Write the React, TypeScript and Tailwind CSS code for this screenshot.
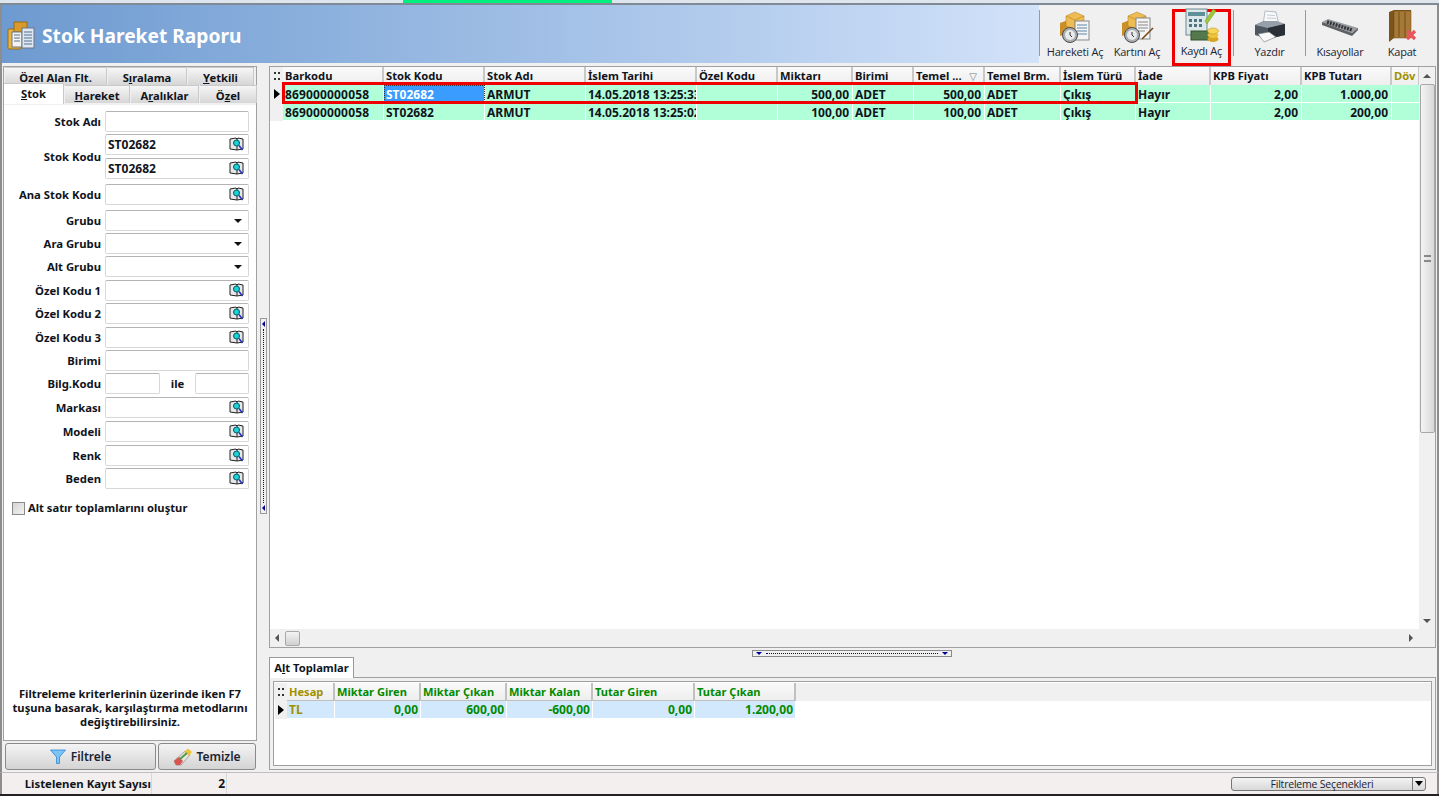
import React from 'react';

const FONT = "font-['Noto_Sans','DejaVu_Sans',sans-serif]";

const COLUMNS = [
  { label: 'Barkodu', w: 'w-[101px]' },
  { label: 'Stok Kodu', w: 'w-[101px]' },
  { label: 'Stok Adı', w: 'w-[101px]' },
  { label: 'İslem Tarihi', w: 'w-[111px]' },
  { label: 'Özel Kodu', w: 'w-[81px]' },
  { label: 'Miktarı', w: 'w-[75px]' },
  { label: 'Birimi', w: 'w-[61px]' },
  { label: 'Temel ...', w: 'w-[71px]', sort: true },
  { label: 'Temel Brm.', w: 'w-[76px]' },
  { label: 'İslem Türü', w: 'w-[75px]' },
  { label: 'İade', w: 'w-[75px]' },
  { label: 'KPB Fiyatı', w: 'w-[91px]' },
  { label: 'KPB Tutarı', w: 'w-[90px]' },
  { label: 'Döv', w: 'w-[28px]', gold: true },
];

const ROWS = [
  ['869000000058', 'ST02682', 'ARMUT', '14.05.2018 13:25:33', '', '500,00', 'ADET', '500,00', 'ADET', 'Çıkış', 'Hayır', '2,00', '1.000,00', ''],
  ['869000000058', 'ST02682', 'ARMUT', '14.05.2018 13:25:02', '', '100,00', 'ADET', '100,00', 'ADET', 'Çıkış', 'Hayır', '2,00', '200,00', ''],
];
const RIGHT_COLS = [5, 7, 11, 12];

const TOTAL_COLS = [
  { label: 'Hesap', value: 'TL', w: 'w-[48px]', gold: true },
  { label: 'Miktar Giren', value: '0,00', w: 'w-[86px]' },
  { label: 'Miktar Çıkan', value: '600,00', w: 'w-[86px]' },
  { label: 'Miktar Kalan', value: '-600,00', w: 'w-[86px]' },
  { label: 'Tutar Giren', value: '0,00', w: 'w-[102px]' },
  { label: 'Tutar Çıkan', value: '1.200,00', w: 'w-[101px]' },
];

type Field = { label?: string; kind: 'text' | 'lookup' | 'select'; value?: string; mt: string };

const FIELDS_TOP: Field[] = [{ label: 'Stok Adı', kind: 'text', mt: 'mt-0' }];

const FIELDS: Field[] = [
  { label: 'Ana Stok Kodu', kind: 'lookup', mt: 'mt-[5px]' },
  { label: 'Grubu', kind: 'select', mt: 'mt-[5px]' },
  { label: 'Ara Grubu', kind: 'select', mt: 'mt-[2px]' },
  { label: 'Alt Grubu', kind: 'select', mt: 'mt-[2px]' },
  { label: 'Özel Kodu 1', kind: 'lookup', mt: 'mt-[3px]' },
  { label: 'Özel Kodu 2', kind: 'lookup', mt: 'mt-[2px]' },
  { label: 'Özel Kodu 3', kind: 'lookup', mt: 'mt-[3px]' },
  { label: 'Birimi', kind: 'text', mt: 'mt-[2px]' },
];

const FIELDS_2: Field[] = [
  { label: 'Markası', kind: 'lookup', mt: 'mt-[3px]' },
  { label: 'Modeli', kind: 'lookup', mt: 'mt-[3px]' },
  { label: 'Renk', kind: 'lookup', mt: 'mt-[3px]' },
  { label: 'Beden', kind: 'lookup', mt: 'mt-[2px]' },
];

const LABEL = 'text-[11.3px] font-bold text-[#10141c] leading-[14px] whitespace-nowrap';
const TOOL_LABEL = "text-[11px] leading-[14px] text-[#1b2433] font-['Open_Sans',sans-serif] whitespace-nowrap tracking-[-0.2px]";

const BookIcon = () => (
  <svg width="16" height="15" viewBox="0 0 16 15" className="shrink-0">
    <path d="M1 2 L7 1 L8 2 L9 1 L14 2 L14 12 L8 13 L1 12 Z" fill="#e8e8e8" stroke="#222" strokeWidth="1" />
    <path d="M8 2 V13" stroke="#222" />
    <circle cx="7.5" cy="6" r="3" fill="#19d3d8" stroke="#0a5560" />
    <path d="M10 8.5 L13.5 13" stroke="#2233cc" strokeWidth="1.6" />
  </svg>
);

const Title = () => (
  <svg width="30" height="32" viewBox="0 0 30 32">
    <rect x="2" y="9" width="13" height="20" rx="1" fill="#e6b24a" stroke="#9a6c17" />
    <rect x="8" y="2" width="13" height="10" fill="#d99a2b" stroke="#9a6c17" />
    <rect x="6" y="12" width="10" height="15" fill="#f3f3f3" stroke="#777" />
    <rect x="16" y="8" width="12" height="20" fill="#dfe8f2" stroke="#6b7480" />
    <path d="M18 12h8M18 15h8M18 18h8M18 21h8M18 24h8M8 15h6M8 18h6M8 21h6" stroke="#56708c" />
  </svg>
);

const BoxStack = () => (
  <>
    <path d="M2 12 L10 9 L10 22 L2 25 Z" fill="#c98f28" />
    <path d="M10 9 L19 12 L19 25 L10 22 Z" fill="#f0c25c" />
    <path d="M8 5 L17 1 L26 5 L26 15 L17 18 L8 15 Z" fill="#eebc52" stroke="#b37f1f" strokeWidth="0.5" />
    <path d="M8 5 L17 9 L26 5 M17 9 V18" stroke="#b37f1f" strokeWidth="0.6" fill="none" />
  </>
);

const Clock = () => (
  <>
    <circle cx="12" cy="24" r="7.5" fill="#a9aeb4" stroke="#4d4d4d" />
    <circle cx="12" cy="24" r="5" fill="#e8eaec" />
    <path d="M12 21 V24 L14 26" stroke="#333" fill="none" />
  </>
);

const HareketIcon = () => (
  <svg width="34" height="33" viewBox="0 0 34 33">
    <BoxStack />
    <rect x="17" y="10" width="14" height="19" fill="#f4f4f4" stroke="#888" />
    <path d="M19 14h10M19 17h10M19 20h10M19 23h10" stroke="#5c87a8" />
    <Clock />
  </svg>
);

const KartIcon = () => (
  <svg width="34" height="33" viewBox="0 0 34 33">
    <BoxStack />
    <rect x="16" y="7" width="14" height="21" fill="#f4f4f4" stroke="#888" />
    <path d="M18 11h10M18 14h10M18 17h10M18 20h7" stroke="#888" />
    <path d="M22 28 L33 17" stroke="#7a4a1a" strokeWidth="1.6" />
    <Clock />
  </svg>
);

const KayitIcon = () => (
  <svg width="36" height="38" viewBox="0 0 36 38">
    <rect x="2" y="3" width="21" height="26" fill="#dbe7e8" stroke="#6d8a90" />
    <rect x="4" y="6" width="17" height="4" fill="#5f8f97" />
    <path d="M5 13h3v3H5zM10 13h3v3h-3zM15 13h3v3h-3zM5 18h3v3H5zM10 18h3v3h-3zM15 18h3v3h-3z" fill="#4f7480" />
    <path d="M21 15 L29 3 L32 5 L23 18 Z" fill="#9dc83c" stroke="#6f9422" strokeWidth="0.5" />
    <rect x="7" y="25" width="20" height="9" fill="#55784c" stroke="#34502f" />
    <ellipse cx="29" cy="33" rx="5.5" ry="3" fill="#d9a41f" />
    <ellipse cx="29" cy="29" rx="5.5" ry="3" fill="#eec43c" />
    <ellipse cx="29" cy="25" rx="5.5" ry="3" fill="#f6d654" stroke="#b98a17" strokeWidth="0.5" />
  </svg>
);

const PrinterIcon = () => (
  <svg width="34" height="34" viewBox="0 0 34 34">
    <path d="M12 1 L23 2 L26 15 L10 15 Z" fill="#f7f9fb" stroke="#9aa3ad" strokeWidth="0.7" />
    <path d="M14 5 L22 5.5 M14 8 L23 8.5" stroke="#c3ccd5" />
    <path d="M2 15 L11 11 L32 14 L32 25 L15 29 L2 25 Z" fill="#4e5660" />
    <path d="M2 15 L15 18 L32 14 L24 11 L11 11 Z" fill="#97a0aa" />
    <path d="M15 18 V29 L32 25 V14 Z" fill="#2b3036" />
    <path d="M5 24 L16 22 L23 27 L11 32 Z" fill="#f8f8f8" stroke="#777" strokeWidth="0.6" />
  </svg>
);

const KeyboardIcon = () => (
  <svg width="38" height="20" viewBox="0 0 38 20">
    <path d="M1 5 L7 2 L37 11 L31 16 Z" fill="#9a9da1" />
    <path d="M6 5 L31 13" stroke="#34363a" strokeWidth="3.5" strokeDasharray="2 1" />
    <path d="M1 5 L31 16 L37 11 L37 13 L31 19 L1 8 Z" fill="#5d6064" />
  </svg>
);

const DoorIcon = () => (
  <svg width="30" height="36" viewBox="0 0 30 36">
    <path d="M2 3 L7 1 L24 1 L24 29 L7 29 L2 33 Z" fill="#7b531b" />
    <rect x="7" y="2" width="17" height="27" fill="#a67a36" stroke="#6a4717" strokeWidth="0.5" />
    <path d="M12 3 V28 M18 3 V28" stroke="#6f4c1a" />
    <path d="M20 22 L28 30 M28 22 L20 30" stroke="#e8545c" strokeWidth="3.2" />
  </svg>
);

const Funnel = () => (
  <svg width="16" height="15" viewBox="0 0 16 15">
    <path d="M0.5 1 H15.5 L9.5 8 V14.5 L6.5 14.5 V8 Z" fill="#7cc4f4" stroke="#2a86d6" strokeWidth="0.8" />
  </svg>
);

const Eraser = () => (
  <svg width="20" height="18" viewBox="0 0 20 18">
    <path d="M1 13 L12 3 L17 7 L8 17 L3 17 Z" fill="#e9e4dc" stroke="#777" strokeWidth="0.6" />
    <path d="M1 13 L6 9 L10 13 L7 17 L3 17 Z" fill="#d9534f" />
    <path d="M11 4 L15 0.5 L19 4 L16 8 Z" fill="#efc43d" />
    <path d="M7 11 L14 5" stroke="#4f9a56" strokeWidth="2" />
  </svg>
);

const ToolButton = ({ icon, label, w, ml = '' }: { icon: React.ReactNode; label: string; w: string; ml?: string }) => (
  <div className={`${w} ${ml} h-[51px] flex flex-col items-center justify-end shrink-0`}>
    <div className="flex-1 flex items-center justify-center pt-[1px]">{icon}</div>
    <span className={TOOL_LABEL}>{label}</span>
  </div>
);

const Sep = () => <div className="w-[1px] h-[46px] bg-[#9a9a9a] shrink-0 mt-[2px] self-start" />;

const U = ({ children }: { children: string }) => <span className="underline">{children}</span>;

const Tab = ({ w, children, active }: { w: string; children: React.ReactNode; active?: boolean }) => (
  <div
    className={`${w} shrink-0 text-center text-[11.2px] font-bold text-[#10141c] border-t border-r border-[#c9c9c9] ${
      active ? 'bg-white h-[21px] leading-[19px] -mt-[2px] relative' : 'h-[18px] leading-[19px] bg-gradient-to-b from-[#f6f6f6] to-[#d6d6d6]'
    }`}
  >
    {children}
  </div>
);

const InputBox = ({ kind, value, w = 'w-[144px]' }: { kind: Field['kind']; value?: string; w?: string }) => (
  <div className={`${w} h-[21px] shrink-0 bg-white border border-[#d8d8d8] border-t-[#b4b4b4] rounded-[2px] flex items-center pl-[2px] pr-[3px] justify-between`}>
    <span className="text-[12px] font-bold text-[#10141c] leading-none">{value}</span>
    {kind === 'lookup' && <BookIcon />}
    {kind === 'select' && <span className="w-0 h-0 border-l-[4px] border-r-[4px] border-t-[4px] border-l-transparent border-r-transparent border-t-[#111] mr-[3px]" />}
  </div>
);

const FieldRow = ({ f }: { f: Field }) => (
  <div className={`flex items-center gap-[4px] ${f.mt}`}>
    <div className={`w-[97px] shrink-0 text-right ${LABEL}`}>{f.label}</div>
    <InputBox kind={f.kind} value={f.value} />
  </div>
);

const Indicator = () => (
  <span className="w-0 h-0 border-t-[5px] border-b-[5px] border-l-[6px] border-t-transparent border-b-transparent border-l-black" />
);

const Grip = () => (
  <div className="grid grid-cols-2 gap-x-[2px] gap-y-[4px] w-[6px]">
    <span className="w-[2px] h-[2px] bg-[#333]" />
    <span className="w-[2px] h-[2px] bg-[#333]" />
    <span className="w-[2px] h-[2px] bg-[#333]" />
    <span className="w-[2px] h-[2px] bg-[#333]" />
  </div>
);

const Scrollbar = () => (
  <div className="w-[16px] shrink-0 bg-[#f0f0f0] flex flex-col items-center">
    <div className="h-[17px] flex items-center justify-center">
      <span className="w-0 h-0 border-l-[4px] border-r-[4px] border-b-[4px] border-l-transparent border-r-transparent border-b-[#555]" />
    </div>
    <div className="w-[15px] h-[349px] border border-[#a8a8a8] rounded-[2px] bg-gradient-to-r from-[#f4f4f4] to-[#d8d8d8] flex items-center justify-center">
      <div className="w-[7px] h-[7px] border-y-2 border-[#888] border-double" />
    </div>
    <div className="flex-1" />
    <div className="h-[17px] flex items-center justify-center">
      <span className="w-0 h-0 border-l-[4px] border-r-[4px] border-t-[4px] border-l-transparent border-r-transparent border-t-[#555]" />
    </div>
  </div>
);

export default function App() {
  return (
    <div className={`${FONT} w-[1439px] h-[796px] overflow-hidden bg-[#f0f0f0] flex flex-col`}>
      {/* Window strip */}
      <div className="h-[3px] shrink-0 bg-[#dfe5ec] flex pl-[403px]">
        <div className="w-[209px] h-[3px] bg-[#00f07f]" />
      </div>
      <div className="h-[2px] shrink-0 bg-[#7f8a96]" />

      <div className="flex-1 min-h-0 flex flex-col border-l-2 border-r-2 border-[#8d8d8d]">
        {/* Title + toolbar */}
        <div className="h-[58px] shrink-0 flex">
          <div className="flex-1 flex items-center pl-[4px] pt-[4px] gap-[6px] bg-gradient-to-r from-[#6d9ad0] to-[#d2e2f9]">
            <Title />
            <h1 className="text-[19.2px] font-bold text-white leading-none">Stok Hareket Raporu</h1>
          </div>
          <div className="w-[398px] shrink-0 flex items-start pt-[3px] bg-[#f0f0f0]">
            <Sep />
            <ToolButton icon={<HareketIcon />} label="Hareketi Aç" w="w-[64px]" ml="ml-[3px]" />
            <ToolButton icon={<KartIcon />} label="Kartını Aç" w="w-[60px]" />
            <div className="w-[59px] h-[57px] ml-[5px] mt-[1px] border-[3px] border-[#ee0000] flex flex-col items-center justify-end pb-[5px] shrink-0">
              <div className="flex-1 flex items-center justify-center"><KayitIcon /></div>
              <span className={TOOL_LABEL}>Kaydı Aç</span>
            </div>
            <div className="w-[2px] shrink-0" />
            <Sep />
            <ToolButton icon={<PrinterIcon />} label="Yazdır" w="w-[71px]" />
            <Sep />
            <ToolButton icon={<KeyboardIcon />} label="Kısayollar" w="w-[68px]" />
            <ToolButton icon={<DoorIcon />} label="Kapat" w="w-[56px]" />
          </div>
        </div>

        <div className="flex-1 min-h-0 flex pt-[3px]">
          {/* Filter panel */}
          <div className="w-[254px] ml-[1px] shrink-0 flex flex-col">
            <div className="flex-1 min-h-0 flex flex-col border border-[#a0a0a0] bg-white">
              <div className="bg-[#f0f0f0] h-[38px] shrink-0">
                <div className="flex pl-[1px] gap-[1px]">
                  <Tab w="w-[102px]">Ö<U>z</U>el Alan Flt.</Tab>
                  <Tab w="w-[79px]">S<U>ı</U>ralama</Tab>
                  <Tab w="w-[66px]"><U>Y</U>etkili</Tab>
                </div>
                <div className="flex gap-[1px]">
                  <Tab w="w-[60px]" active><U>S</U>tok</Tab>
                  <Tab w="w-[65px]"><U>H</U>areket</Tab>
                  <Tab w="w-[68px]">A<U>r</U>alıklar</Tab>
                  <Tab w="w-[57px]">Ö<U>z</U>el</Tab>
                </div>
              </div>
              <div className="flex-1 min-h-0 flex flex-col pt-[6px]">
                {FIELDS_TOP.map((f, i) => <FieldRow key={i} f={f} />)}
                <div className="flex items-center gap-[4px] mt-[2px]">
                  <div className={`w-[97px] shrink-0 text-right ${LABEL}`}>Stok Kodu</div>
                  <div className="flex flex-col gap-[3px]">
                    <InputBox kind="lookup" value="ST02682" />
                    <InputBox kind="lookup" value="ST02682" />
                  </div>
                </div>
                {FIELDS.map((f, i) => <FieldRow key={i} f={f} />)}
                <div className="flex items-center gap-[4px] mt-[2px]">
                  <div className={`w-[97px] shrink-0 text-right ${LABEL}`}>Bilg.Kodu</div>
                  <InputBox kind="text" w="w-[55px]" />
                  <div className={`w-[27px] shrink-0 text-center ${LABEL}`}>ile</div>
                  <InputBox kind="text" w="w-[54px]" />
                </div>
                {FIELDS_2.map((f, i) => <FieldRow key={i} f={f} />)}
                <div className="flex items-center gap-[3px] pl-[8px] mt-[12px]">
                  <div className="w-[13px] h-[13px] border border-[#8a8a8a] bg-gradient-to-br from-[#d5d5d5] to-[#f2f2f2]" />
                  <span className="text-[11.2px] font-bold text-[#10141c] leading-[14px]">Alt satır toplamlarını oluştur</span>
                </div>
                <div className="flex-1" />
                <p className="text-[11.2px] leading-[14px] font-bold text-[#10141c] text-center pb-[11px]">
                  Filtreleme kriterlerinin üzerinde iken F7<br />
                  tuşuna basarak, karşılaştırma metodlarını<br />
                  değiştirebilirsiniz.
                </p>
              </div>
            </div>
            <div className="h-[30px] shrink-0 flex gap-[2px] pt-[2px] pl-[2px] mb-[1px]">
              <div className="w-[151px] h-[27px] rounded-[3px] border border-[#8a8a8a] bg-gradient-to-b from-[#f4f4f4] to-[#d4d4d4] flex items-center justify-center gap-[5px] text-[12px] text-[#1b2433] font-semibold">
                <Funnel />Filtrele
              </div>
              <div className="w-[98px] h-[27px] rounded-[3px] border border-[#8a8a8a] bg-gradient-to-b from-[#f4f4f4] to-[#d4d4d4] flex items-center justify-center gap-[3px] text-[12px] text-[#1b2433] font-semibold">
                <Eraser />Temizle
              </div>
            </div>
          </div>

          {/* Vertical splitter */}
          <div className="w-[12px] shrink-0 flex items-start justify-center pt-[252px]">
            <div className="w-[7px] h-[196px] border border-[#999] flex flex-col items-center justify-between py-[2px] bg-[#f0f0f0]">
              <span className="w-0 h-0 border-y-[3px] border-r-[3px] border-y-transparent border-r-[#000090]" />
              <div className="flex-1 my-[2px] border-l border-dotted border-[#000090]" />
              <span className="w-0 h-0 border-y-[3px] border-r-[3px] border-y-transparent border-r-[#000090]" />
            </div>
          </div>

          {/* Right side */}
          <div className="flex-1 min-w-0 flex flex-col pr-[1px]">
            <div className="h-[582px] shrink-0 border border-[#a0a0a0] bg-white flex flex-col">
              <div className="flex-1 min-h-0 flex">
                <div className="flex-1 min-w-0 relative overflow-hidden">
                  <div className="flex h-[18px] bg-[#f0f0f0]">
                    <div className="w-[13px] shrink-0 flex items-center justify-center"><Grip /></div>
                    {COLUMNS.map(c => (
                      <div key={c.label} className={`${c.w} shrink-0 flex items-center justify-between pl-[2px] pr-[6px] pt-[1px] text-[11.2px] font-bold whitespace-nowrap overflow-hidden border-r-2 border-[#c8c8c8] bg-gradient-to-b from-[#fafafa] to-[#eeeeee] ${c.gold ? 'text-[#a09000]' : 'text-[#10141c]'}`}>
                        {c.label}
                        {c.sort && <span className="text-[10px] text-[#777] font-normal">▽</span>}
                      </div>
                    ))}
                  </div>
                  {ROWS.map((row, r) => (
                    <div key={r} className="flex h-[18px]">
                      <div className="w-[13px] shrink-0 bg-[#f0f0f0] flex items-center justify-center">{r === 0 && <Indicator />}</div>
                      {row.map((cell, i) => {
                        const selected = r === 0 && i === 1;
                        return (
                          <div
                            key={i}
                            className={`${COLUMNS[i].w} shrink-0 h-[17px] px-[2px] text-[12px] leading-[19px] font-bold whitespace-nowrap overflow-hidden border-r border-white ${i === 0 ? 'tracking-[0.15px]' : ''} ${RIGHT_COLS.includes(i) ? 'text-right pr-[3px]' : ''} ${selected ? 'bg-[#3b9cff] text-white outline-1 outline-dotted outline-[#333] -outline-offset-1' : 'bg-[#b1ffd9] text-[#10141c]'}`}
                          >
                            {cell}
                          </div>
                        );
                      })}
                    </div>
                  ))}
                  {/* Annotation drawn over the first row */}
                  <div className="absolute left-[12px] top-[15px] w-[856px] h-[22px] border-[3px] border-[#ee0000] pointer-events-none" />
                </div>
                <Scrollbar />
              </div>
              <div className="h-[18px] shrink-0 flex bg-[#f0f0f0] pr-[16px]">
                <div className="flex-1 flex items-center pl-[5px]">
                  <span className="w-0 h-0 border-y-[4px] border-r-[4px] border-y-transparent border-r-[#555]" />
                  <div className="w-[15px] h-[15px] ml-[6px] border border-[#a8a8a8] rounded-[2px] bg-gradient-to-b from-[#f4f4f4] to-[#d0d0d0]" />
                  <div className="flex-1" />
                  <span className="w-0 h-0 border-y-[4px] border-l-[4px] border-y-transparent border-l-[#555] mr-[6px]" />
                </div>
              </div>
            </div>

            {/* Horizontal splitter */}
            <div className="h-[7px] mt-[2px] shrink-0 flex pl-[483px]">
              <div className="w-[200px] h-[7px] border border-[#8a8a8a] flex items-center justify-between px-[3px]">
                <span className="w-0 h-0 border-x-[3px] border-t-[3px] border-x-transparent border-t-[#000090]" />
                <div className="flex-1 mx-[4px] border-t border-dotted border-[#000090]" />
                <span className="w-0 h-0 border-x-[3px] border-t-[3px] border-x-transparent border-t-[#000090]" />
              </div>
            </div>

            {/* Sub totals */}
            <div className="flex-1 min-h-0 flex flex-col">
              <div className="h-[21px] shrink-0 flex">
                <div className="w-[85px] bg-white border border-b-0 border-[#999] text-center text-[11.2px] leading-[20px] font-bold text-[#10141c] relative">A<U>l</U>t Toplamlar</div>
              </div>
              <div className="flex-1 min-h-0 border border-[#a0a0a0] -mt-[1px] p-[3px] mb-[2px] bg-[#f0f0f0]">
                <div className="h-full border border-[#a0a0a0] bg-white pt-[1px]">
                  <div className="flex h-[18px] bg-[#f0f0f0] pl-[1px]">
                    <div className="w-[12px] shrink-0 flex items-center justify-center"><Grip /></div>
                    {TOTAL_COLS.map(c => (
                      <div key={c.label} className={`${c.w} shrink-0 pl-[2px] text-[11.1px] leading-[17px] font-bold whitespace-nowrap border-r-2 border-b border-[#c0c0c0] bg-gradient-to-b from-[#fafafa] to-[#eeeeee] ${c.gold ? 'text-[#a09000]' : 'text-[#008a00]'}`}>{c.label}</div>
                    ))}
                  </div>
                  <div className="flex h-[18px] pl-[1px]">
                    <div className="w-[12px] shrink-0 bg-[#f0f0f0] flex items-center justify-center"><Indicator /></div>
                    {TOTAL_COLS.map(c => (
                      <div key={c.label} className={`${c.w} shrink-0 px-[2px] text-[12px] leading-[17px] h-[17px] font-bold border-r border-white bg-[#d2e8fc] ${c.gold ? 'text-[#a09000]' : 'text-[#008a00] text-right'}`}>{c.value}</div>
                    ))}
                  </div>
                </div>
              </div>
            </div>
          </div>
        </div>
      </div>

      {/* Status bar */}
      <div className="h-[22px] shrink-0 flex items-center bg-[#f2efee] border-t border-[#c0c0c0] border-l-2 border-l-[#8d8d8d] border-r-2 border-r-[#8d8d8d]">
        <div className="w-[150px] h-full text-right text-[11.4px] leading-[21px] font-bold text-[#10141c] border-r border-[#d8d8d8]">Listelenen Kayıt Sayısı</div>
        <div className="w-[75px] h-full text-right pr-[1px] text-[12px] leading-[21px] font-bold text-[#10141c] border-r border-[#d8d8d8]">2</div>
        <div className="flex-1" />
        <div className="w-[195px] h-[14px] mr-[11px] flex rounded-[3px] border border-[#777] bg-gradient-to-b from-[#f4f4f4] to-[#d8d8d8] text-[10.5px] leading-[13px] text-[#1b2433] font-['Open_Sans',sans-serif]">
          <span className="flex-1 text-center whitespace-nowrap tracking-[-0.2px]">Filtreleme Seçenekleri</span>
          <span className="w-[13px] border-l border-[#777] flex items-center justify-center">
            <span className="w-0 h-0 border-x-[4px] border-t-[5px] border-x-transparent border-t-black" />
          </span>
        </div>
      </div>
      <div className="h-[2px] shrink-0 bg-[#222]" />
    </div>
  );
}
